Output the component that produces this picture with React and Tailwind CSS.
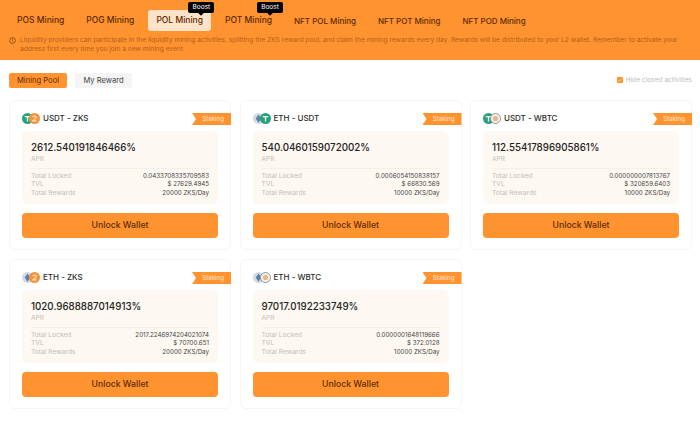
const tabs = [
  { name: "POS Mining", size: "text-[8.5px]" },
  { name: "POG Mining", size: "text-[8.5px]" },
  { name: "POL Mining", size: "text-[8.5px]", active: true },
  { name: "POT Mining", size: "text-[8.5px]", boost: true },
  { name: "NFT POL Mining", size: "text-[8px]" },
  { name: "NFT POT Mining", size: "text-[8px]" },
  { name: "NFT POD Mining", size: "text-[8px]" },
];

const pools = [
  { a: "usdt", b: "zks", title: "USDT - ZKS", apr: "2612.540191846466%", locked: "0.0433708335709583", tvl: "$ 27629.4945", rewards: "20000 ZKS/Day" },
  { a: "eth", b: "usdt", title: "ETH - USDT", apr: "540.0460159072002%", locked: "0.0006054150838157", tvl: "$ 66830.569", rewards: "10000 ZKS/Day" },
  { a: "usdt", b: "wbtc", title: "USDT - WBTC", apr: "112.55417896905861%", locked: "0.000000007813767", tvl: "$ 320659.6403", rewards: "10000 ZKS/Day" },
  { a: "eth", b: "zks", title: "ETH - ZKS", apr: "1020.9688887014913%", locked: "2017.2246974204021074", tvl: "$ 70700.651", rewards: "20000 ZKS/Day" },
  { a: "eth", b: "wbtc", title: "ETH - WBTC", apr: "97017.0192233749%", locked: "0.0000001648119666", tvl: "$ 372.0128", rewards: "10000 ZKS/Day" },
];

function Coin({ kind, className }) {
  if (kind === "usdt") {
    return (
      <svg viewBox="0 0 12 12" className={className}>
        <circle cx="6" cy="6" r="6" fill="#26a17b" />
        <path d="M3 3.2h6v1.3H6.7V9.4H5.3V4.5H3z" fill="#fff" />
      </svg>
    );
  }
  if (kind === "zks") {
    return (
      <svg viewBox="0 0 12 12" className={className}>
        <circle cx="6" cy="6" r="6" fill="#f5923a" />
        <path d="M4 4.6C4.3 3 8 3 8 4.9 8 6.3 5.2 7 4.2 8.6H8.2" fill="none" stroke="#ffe3c4" strokeWidth="1.2" />
      </svg>
    );
  }
  if (kind === "wbtc") {
    return (
      <svg viewBox="0 0 12 12" className={className}>
        <circle cx="6" cy="6" r="5.5" fill="#f6efe6" stroke="#8a8f98" strokeWidth="1" />
        <circle cx="6" cy="6" r="2.8" fill="#eab58c" />
      </svg>
    );
  }
  return (
    <svg viewBox="0 0 12 12" className={className}>
      <circle cx="6" cy="6" r="6" fill="#d3dae4" />
      <path d="M6 1.5 9 6 6 10.5 3 6z" fill="#5a7fa8" />
    </svg>
  );
}

function Tab({ tab }) {
  return (
    <div className="relative">
      <div className={`h-[21px] px-2 flex items-center rounded-[3px] whitespace-nowrap text-[#5c2a05] font-medium ${tab.size} ${tab.active ? "bg-[#ffe3c8]" : ""}`}>
        {tab.name}
      </div>
      {(tab.active || tab.boost) && (
        <div className="absolute -top-2 left-[40px] w-[26px] h-[11px] rounded-[2px] bg-black text-white text-[6.5px] flex items-center justify-center">
          Boost
          <span className="absolute -bottom-[2px] left-[11px] w-[4px] h-[4px] rotate-45 bg-black" />
        </div>
      )}
    </div>
  );
}

function PoolCard({ pool }) {
  return (
    <div className="relative h-[150px] rounded-md border border-[#f7f5f2] bg-white px-3 pt-[30px]">
      <div className="absolute top-[11px] left-3 flex items-center h-[12px]">
        <Coin kind={pool.a} className="w-[11px] h-[11px]" />
        <Coin kind={pool.b} className="w-[11px] h-[11px] -ml-1" />
        <span className="ml-[3px] text-[8px] font-medium text-[#2c2c2c] whitespace-nowrap">{pool.title}</span>
      </div>
      <div
        className="absolute top-[12px] -right-px w-[39px] h-[12px] bg-[#ff9330] text-[#ffe9d2] text-[6.2px] flex items-center justify-end pr-[7px]"
        style={{ clipPath: "polygon(0 0, 100% 0, 100% 100%, 0 100%, 4px 50%)" }}
      >
        Staking
      </div>
      <div className="h-[73px] rounded-md bg-[#fdf8f1] px-[9px] pt-[10px]">
        <div className="text-[9.75px] leading-[14px] font-medium text-[#222] whitespace-nowrap">{pool.apr}</div>
        <div className="text-[6.5px] leading-[9px] text-[#c4c0ba]">APR</div>
        <div className="mt-[4px] border-t border-[#f5efe6] pt-[3px] text-[6.7px] leading-[8.3px]">
          <div className="flex justify-between"><span className="text-[#c4c0ba]">Total Locked</span><span className="text-[#444] text-[6.2px]">{pool.locked}</span></div>
          <div className="flex justify-between"><span className="text-[#c4c0ba]">TVL</span><span className="text-[#444] text-[6.2px]">{pool.tvl}</span></div>
          <div className="flex justify-between"><span className="text-[#c4c0ba]">Total Rewards</span><span className="text-[#444] text-[6.2px]">{pool.rewards}</span></div>
        </div>
      </div>
      <div className="mt-[9px] h-[25px] rounded-[4px] bg-[#ff9330] flex items-center justify-center text-[#5c2a05] text-[8.7px] font-medium">
        Unlock Wallet
      </div>
    </div>
  );
}

export default function App() {
  return (
    <div className="w-[700px] h-[433px] overflow-hidden bg-white font-['Inter','Liberation_Sans',sans-serif]">
      <div className="h-[60px] bg-[#ff9330] px-[9px] pt-[10px]">
        <div className="flex gap-[6px]">
          {tabs.map((t) => <Tab key={t.name} tab={t} />)}
        </div>
        <div className="mt-[5px] flex text-[6.65px] leading-[8.5px] text-[#b3601c]">
          <svg viewBox="0 0 12 12" className="w-[7px] h-[7px] shrink-0 mt-px mr-[4px] text-[#6b3a10]" fill="none" stroke="currentColor" strokeWidth="1.2">
            <circle cx="6" cy="6" r="5" />
            <path d="M6 3v3.5M6 8v1" />
          </svg>
          <p className="w-[665px]">
            Liquidity providers can participate in the liquidity mining activities, splitting the ZKS reward pool, and claim the mining rewards every day. Rewards will be distributed to your L2 wallet. Remember to activate your address first every time you join a new mining event.
          </p>
        </div>
      </div>

      <div className="flex items-center justify-between pl-[9px] pr-[8px] mt-[13px] h-[15px]">
        <div className="flex gap-2">
          <div className="w-[58px] h-[15px] rounded-[2px] bg-[#ff9330] text-[#5c2a05] text-[7.6px] flex items-center justify-center">Mining Pool</div>
          <div className="w-[57px] h-[15px] rounded-[2px] bg-[#f5f5f5] text-[#444] text-[7.6px] flex items-center justify-center">My Reward</div>
        </div>
        <div className="flex items-center gap-[3px] text-[6.6px] text-[#bdbdbd]">
          <span className="w-[6px] h-[6px] rounded-[1px] bg-[#ff9330] text-white text-[5px] leading-none flex items-center justify-center">✓</span>
          Hide closed activities
        </div>
      </div>

      <div className="grid grid-cols-[222px_222px_222px] gap-x-[8.5px] gap-y-[9px] pl-[9px] mt-[12px]">
        {pools.map((p) => <PoolCard key={p.title} pool={p} />)}
      </div>
    </div>
  );
}
